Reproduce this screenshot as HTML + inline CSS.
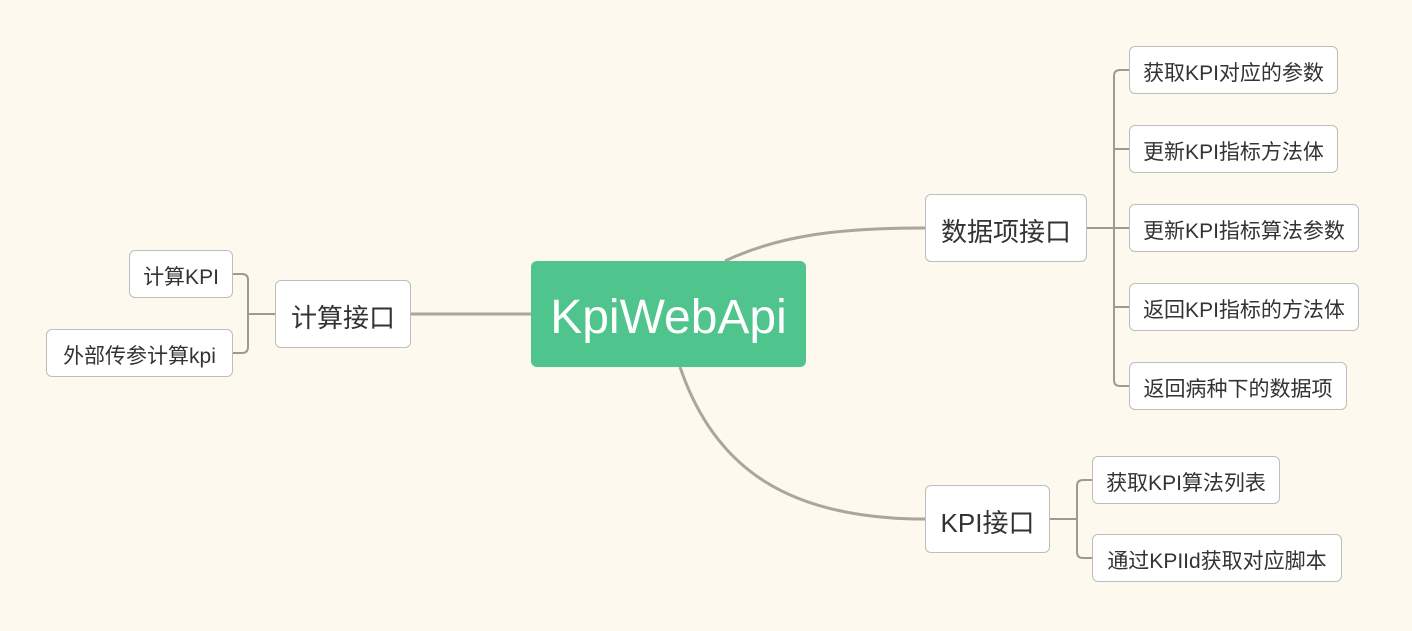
<!DOCTYPE html>
<html><head><meta charset="utf-8"><style>
body{margin:0;width:1412px;height:631px;background:#fdf9ee;position:relative;overflow:hidden;font-family:"Liberation Sans","Noto Sans CJK SC",sans-serif;}
.b{position:absolute;box-sizing:border-box;background:#fff;border:1px solid #bdbdbd;border-radius:6px;color:#333;display:flex;align-items:center;justify-content:center;font-size:21px;white-space:nowrap;padding-top:3px;}
.m{font-size:26px;padding-top:5px;}
svg{position:absolute;left:0;top:0;}
</style></head><body>
<svg width="1412" height="631" fill="none" stroke="#aaa59d">
<path d="M411 314H531" stroke-width="3"/>
<path d="M725 261C780 235 840 228 925 228" stroke-width="3"/>
<path d="M680 367C715 470 790 519 925 519" stroke-width="3"/>
<g stroke="#9e9a92" stroke-width="2">
<path d="M233 274H242Q248 274 248 280V347Q248 353 242 353H233M248 314H275"/>
<path d="M1087 228H1129M1129 70H1120Q1114 70 1114 76V380Q1114 386 1120 386H1129M1114 149H1129M1114 307H1129"/>
<path d="M1050 519H1077M1092 480H1083Q1077 480 1077 486V552Q1077 558 1083 558H1092"/>
</g>
</svg>
<div class="b" style="left:531px;top:261px;width:275px;height:106px;background:#4fc48c;border:none;color:#fff;font-size:48px;padding-top:6px;">KpiWebApi</div>
<div class="b m" style="left:275px;top:280px;width:136px;height:68px;">计算接口</div>
<div class="b" style="left:129px;top:250px;width:104px;height:48px;">计算KPI</div>
<div class="b" style="left:46px;top:329px;width:187px;height:48px;">外部传参计算kpi</div>
<div class="b m" style="left:925px;top:194px;width:162px;height:68px;">数据项接口</div>
<div class="b m" style="left:925px;top:485px;width:125px;height:68px;">KPI接口</div>
<div class="b" style="left:1129px;top:46px;width:209px;height:48px;">获取KPI对应的参数</div>
<div class="b" style="left:1129px;top:125px;width:209px;height:48px;">更新KPI指标方法体</div>
<div class="b" style="left:1129px;top:204px;width:230px;height:48px;">更新KPI指标算法参数</div>
<div class="b" style="left:1129px;top:283px;width:230px;height:48px;">返回KPI指标的方法体</div>
<div class="b" style="left:1129px;top:362px;width:218px;height:48px;">返回病种下的数据项</div>
<div class="b" style="left:1092px;top:456px;width:188px;height:48px;">获取KPI算法列表</div>
<div class="b" style="left:1092px;top:534px;width:250px;height:48px;">通过KPIId获取对应脚本</div>
</body></html>
